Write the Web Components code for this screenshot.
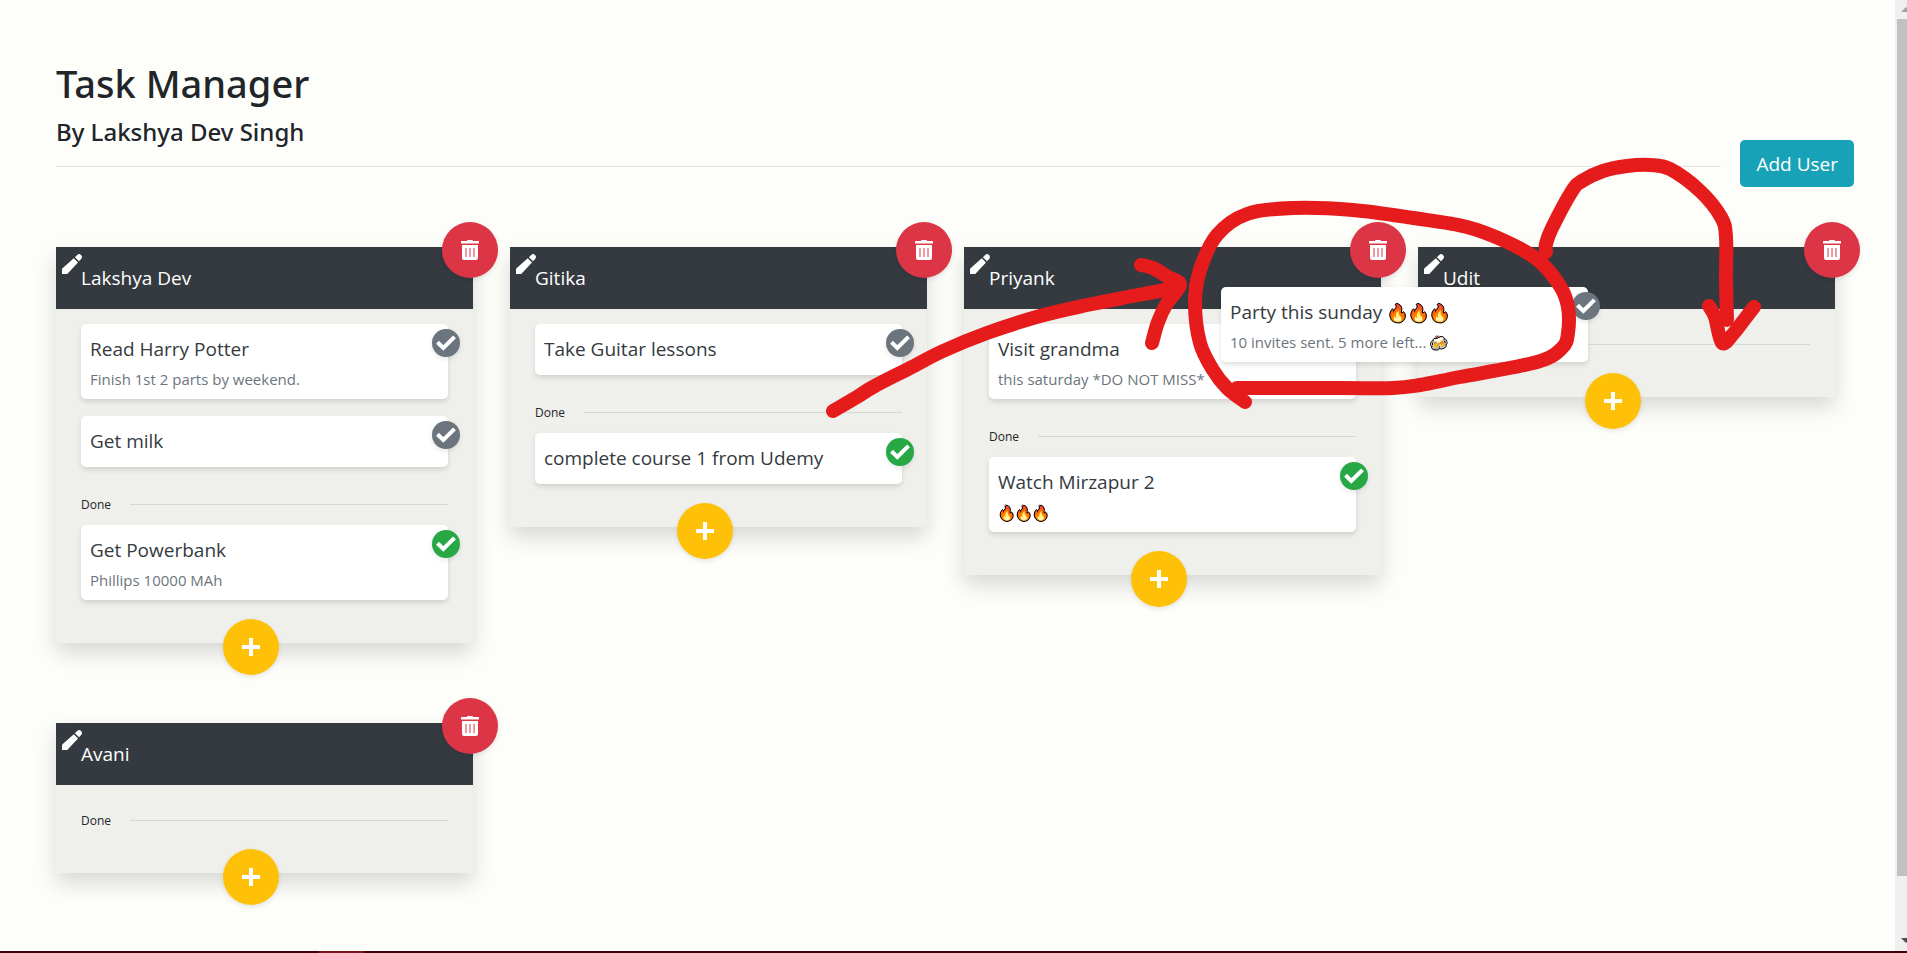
<!DOCTYPE html>
<html lang="en">
<head>
<meta charset="utf-8">
<title>Task Manager</title>
<style>
  body {
    margin: 0;
    background: #fdfefa;
    color: #212529;
    font-family: "Open Sans", "Noto Sans", sans-serif;
  }
</style>
</head>
<body>

<app-window>
  <page-header>
    <span slot="title">Task Manager</span>
    <span slot="byline">By Lakshya Dev Singh</span>
  </page-header>

  <task-board>
    <user-column name="Lakshya Dev">
      <task-card slot="todo">Read Harry Potter<span slot="detail">Finish 1st 2 parts by weekend.</span></task-card>
      <task-card slot="todo">Get milk</task-card>
      <task-card slot="done" done>Get Powerbank<span slot="detail">Phillips 10000 MAh</span></task-card>
    </user-column>

    <user-column name="Gitika">
      <task-card slot="todo">Take Guitar lessons</task-card>
      <task-card slot="done" done>complete course 1 from Udemy</task-card>
    </user-column>

    <user-column name="Priyank">
      <task-card slot="todo">Visit grandma<span slot="detail">this saturday *DO NOT MISS*</span></task-card>
      <task-card slot="done" done>Watch Mirzapur 2<span slot="detail"><emoji-text small>🔥🔥🔥</emoji-text></span></task-card>
    </user-column>

    <user-column name="Udit" drop-target></user-column>
    <user-column name="Avani"></user-column>

    <task-card slot="dragged">Party this sunday <emoji-text>🔥🔥🔥</emoji-text><span slot="detail">10 invites sent. 5 more left... <emoji-text small>🍻</emoji-text></span></task-card>
  </task-board>

  <ink-layer slot="overlay"></ink-layer>
</app-window>

<script>
class BaseElement extends HTMLElement {
  constructor() {
    super();
    this.attachShadow({ mode: "open" }).innerHTML = this.render();
  }
}

const icons = {
  pencil: `<svg viewBox="0 0 20 20" width="20" height="20" aria-hidden="true" fill="#fff">
    <path d="M0 20v-4.600a1.500 1.500 0 0 1 .5-1.100L11.800 4.200 16 8.400 5.700 19.400a1.600 1.600 0 0 1-1.200.6z"/>
    <path d="M12.900 3.200 15.200.9a2.700 2.700 0 0 1 3.800.200 2.700 2.700 0 0 1 .1 3.800L17 7.300z"/></svg>`,
  trash: `<svg viewBox="0 0 18 20" width="18" height="20" aria-hidden="true">
    <path fill="#fff" d="M6 1a1 1 0 0 1 1-1h4a1 1 0 0 1 1 1h5.500a.5.5 0 0 1 .5.5V3a.5.5 0 0 1-.5.5H.5A.5.500 0 0 1 0 3V1.500A.5.5 0 0 1 .5 1zM1 5h16v13a2 2 0 0 1-2 2H3a2 2 0 0 1-2-2z"/>
    <path stroke="#dc3545" stroke-width="1" d="M5 8v9M9 8v9M13 8v9"/></svg>`,
  plus: `<svg viewBox="0 0 18 18" width="18" height="18" aria-hidden="true">
    <path fill="none" stroke="#fff" stroke-width="4" stroke-linecap="square" d="M9 2v14M2 9h14"/></svg>`,
  check: `<svg viewBox="0 0 20 16" width="20" height="16" aria-hidden="true">
    <path fill="none" stroke="#fff" stroke-width="4" stroke-linejoin="miter" d="M1.500 7.300 7.300 13 18.500 1.800"/></svg>`
};

customElements.define("app-window", class extends BaseElement {
  render() {
    return `<style>
      :host { display: flex; flex-direction: column; min-height: 100vh; position: relative; overflow: hidden; }
      .view { flex: 1; display: flex; }
      main { flex: 1; padding: 59px 41px 0 56px; }
      footer { height: 2px; background: #3e000a; padding-left: 319px; }
      .active { display: block; width: 45px; height: 2px; background: #7c1420; }
    </style>
    <div class="view"><main><slot></slot></main><scroll-rail></scroll-rail></div>
    <footer><span class="active"></span></footer>
    <slot name="overlay"></slot>`;
  }
});

customElements.define("scroll-rail", class extends BaseElement {
  render() {
    return `<style>
      :host { display: flex; flex-direction: column; width: 12px; background: #f0f0f0; }
      svg { display: block; flex: none; }
      .track { flex: 1; display: flex; flex-direction: column; padding-left: 2px; }
      .thumb { flex: 857; background: #c1c1c1; }
      .rest { flex: 56; }
    </style>
    <svg width="12" height="19" aria-hidden="true"><path fill="#a3a3a3" d="M6 12l5-5 1 1v4z"/></svg>
    <div class="track"><div class="thumb"></div><div class="rest"></div></div>
    <svg width="12" height="19" aria-hidden="true"><path fill="#505050" d="M6 6h6v4l-1 1z"/></svg>`;
  }
});

customElements.define("page-header", class extends BaseElement {
  render() {
    return `<style>
      :host { display: block; margin-bottom: 60px; }
      h1, h2 { margin: 0; font-family: "Noto Sans", sans-serif; font-weight: 500; }
      h1 { font-size: 38px; line-height: 48px; margin-bottom: 10px; }
      h2 { font-size: 24px; line-height: 30px; }
      .bar { display: flex; align-items: center; gap: 19px; margin-top: -7px; }
      hr { flex: 1; margin: 5px 0 0; border: 0; border-top: 1px solid #e3e4e1; }
      button {
        height: 47px; padding: 0 16px; border: 0; border-radius: 5px;
        background: #17a2b8; color: #fff; font: 19px "Open Sans", sans-serif;
      }
    </style>
    <h1><slot name="title"></slot></h1>
    <h2><slot name="byline"></slot></h2>
    <div class="bar"><hr><button type="button">Add User</button></div>`;
  }
});

customElements.define("task-board", class extends BaseElement {
  render() {
    return `<style>
      :host {
        display: grid; grid-template-columns: repeat(4, 1fr); gap: 80px 37px;
        align-items: start; padding-right: 19px; position: relative;
      }
      /* the card being dragged floats free of the columns */
      ::slotted([slot=dragged]) {
        position: absolute; left: 1165px; top: 40px; width: 367px; z-index: 2;
      }
    </style>
    <slot></slot><slot name="dragged"></slot>`;
  }
});

customElements.define("round-button", class extends BaseElement {
  render() {
    const icon = icons[this.getAttribute("icon")];
    return `<style>
      :host { display: block; }
      button {
        display: flex; align-items: center; justify-content: center;
        width: 56px; height: 56px; padding: 0; border: 0; border-radius: 50%;
        background: var(--fill); box-shadow: 0 2px 5px rgba(0,0,0,.1);
      }
    </style>
    <button type="button" aria-label="${this.getAttribute("label")}">${icon}</button>`;
  }
});

customElements.define("user-column", class extends BaseElement {
  render() {
    return `<style>
      :host { display: block; position: relative; background: #efefeb; box-shadow: 0 10px 20px rgba(0,0,0,.15); }
      header { position: relative; background: #343a40; color: #fff; padding: 16px 25px; }
      h3 { margin: 0; font-size: 19px; line-height: 30px; font-weight: 400; }
      .edit { position: absolute; left: 6px; top: 7px; padding: 0; border: 0; background: none; line-height: 0; }
      .delete { position: absolute; right: -25px; top: -25px; --fill: #dc3545; }
      .add { position: absolute; left: 40%; bottom: -32px; --fill: #ffc107; }
      .body { padding: 15px 25px 26px; }
      .rule { display: flex; align-items: center; gap: 19px; font-size: 12px; line-height: 41px; }
      .rule hr { flex: 1; margin: 0; border: 0; border-top: 1px solid #d7d7d3; }
      /* a card held over the column takes the place of the list's label */
      :host([drop-target]) .rule span { visibility: hidden; }
      .finished { min-height: 6px; }
      ::slotted(task-card) { margin-bottom: 17px; }
    </style>
    <header>
      <button class="edit" type="button" aria-label="Rename user">${icons.pencil}</button>
      <h3>${this.getAttribute("name")}</h3>
    </header>
    <div class="body">
      <slot name="todo"></slot>
      <div class="rule"><span>Done</span><hr></div>
      <div class="finished"><slot name="done"></slot></div>
    </div>
    <round-button class="delete" icon="trash" label="Delete user"></round-button>
    <round-button class="add" icon="plus" label="Add task"></round-button>`;
  }
});

customElements.define("task-card", class extends BaseElement {
  render() {
    return `<style>
      :host {
        display: block; box-sizing: border-box; position: relative; padding: 10px 9px 8px;
        background: #fff; border-radius: 5px; box-shadow: 0 3px 5px rgba(0,0,0,.12);
      }
      .title { font-size: 19px; line-height: 30px; margin-bottom: 3px; color: #343a40; }
      ::slotted([slot=detail]) { display: block; font-size: 15px; line-height: 24px; color: #6c757d; }
      .check {
        position: absolute; right: -12px; top: 5px; width: 28px; height: 28px; padding: 0; border: 0;
        display: flex; align-items: center; justify-content: center;
        border-radius: 50%; background: #6c757d; box-shadow: 0 2px 5px rgba(0,0,0,.1);
      }
      :host([done]) .check { background: #28a745; }
    </style>
    <div class="title"><slot></slot></div>
    <slot name="detail"></slot>
    <button class="check" type="button" aria-label="Toggle done">${icons.check}</button>`;
  }
});

customElements.define("emoji-text", class extends BaseElement {
  render() {
    return `<style>
      :host {
        font-size: 17px; line-height: 1; font-weight: 400;
        text-shadow: 1px 0 #000, -1px 0 #000, 0 1px #000, 0 -1px #000;
      }
      :host([small]) { font-size: 14px; }
    </style><slot></slot>`;
  }
});

customElements.define("ink-layer", class extends BaseElement {
  /* a smooth line through a list of points, as Catmull-Rom segments */
  static curve(points) {
    const p = points;
    let d = `M${p[0]}`;
    for (let i = 0; i < p.length - 1; i++) {
      const a = p[Math.max(i - 1, 0)], b = p[i], c = p[i + 1], e = p[Math.min(i + 2, p.length - 1)];
      d += `C${b[0] + (c[0] - a[0]) / 6},${b[1] + (c[1] - a[1]) / 6} ${c[0] - (e[0] - b[0]) / 6},${c[1] - (e[1] - b[1]) / 6} ${c[0]},${c[1]}`;
    }
    return d;
  }
  render() {
    const strokes = [
      [[833,411],[857,397],[873,387],[910,368],[943,351],[987,333],[1040,316],[1087,305],[1133,296],[1165,290],[1178,288]],
      [[1141,265],[1153,268],[1168,277],[1180,285],[1167,303],[1158,322],[1152,343]],
      [[1245,402],[1227,388],[1213,370],[1200,343],[1195,303],[1200,270],[1217,235],[1247,214],[1293,208],[1353,210],[1413,218],[1467,227],[1507,242],[1538,260],[1560,286],[1568,307],[1568,333],[1562,348],[1537,362],[1460,377],[1420,385],[1393,388],[1340,388],[1237,388]],
      [[1546,252],[1546,244],[1552,228],[1572,191],[1582,181],[1603,171],[1627,166],[1650,165],[1670,169],[1700,191],[1721,217],[1726,237],[1726,280],[1727,320]],
      [[1709,306],[1715,317],[1722,343],[1733,334],[1744,320],[1754,307]]
    ];
    return `<style>
      :host { position: absolute; left: 0; top: 0; z-index: 3; pointer-events: none; line-height: 0; }
    </style>
    <svg width="1800" height="450" aria-hidden="true" fill="none" stroke="#e61c1c" stroke-width="14"
      stroke-linecap="round" stroke-linejoin="round">
      ${strokes.map(s => `<path d="${this.constructor.curve(s)}"/>`).join("")}
    </svg>`;
  }
});
</script>
</body>
</html>
